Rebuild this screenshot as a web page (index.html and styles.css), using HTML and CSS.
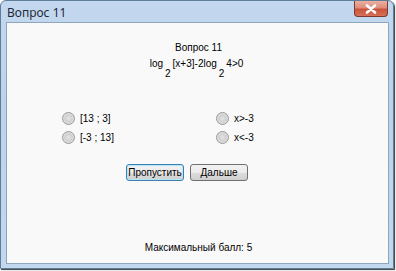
FILE: index.html
```html
<!DOCTYPE html>
<html>
<head>
<meta charset="utf-8">
<link rel="stylesheet" href="styles.css">
</head>
<body>
<div class="window">
  <div class="titlebar">
    <span class="title">Вопрос 11</span>
    <span class="close">
      <svg width="12" height="10" viewBox="0 0 12 10"><path d="M2 1.5 L10 8.5 M10 1.5 L2 8.5" stroke="#fff" stroke-width="2.6" stroke-linecap="round"/></svg>
    </span>
  </div>
  <div class="content">
    <div class="qtitle">Вопрос 11</div>
    <div class="formula">log<sub>2</sub>[x+3]-2log<sub>2</sub>4&gt;0</div>
    <div class="options">
      <label class="opt"><span class="radio"></span>[13 ; 3]</label>
      <label class="opt"><span class="radio"></span>x&gt;-3</label>
      <label class="opt"><span class="radio"></span>[-3 ; 13]</label>
      <label class="opt"><span class="radio"></span>x&lt;-3</label>
    </div>
    <div class="buttons">
      <button class="btn default">Пропустить</button>
      <button class="btn">Дальше</button>
    </div>
    <div class="spacer"></div>
    <div class="score">Максимальный балл: 5</div>
  </div>
</div>
</body>
</html>
```
FILE: styles.css
```css
html, body {
  margin: 0;
  padding: 0;
  background: #ffffff;
}
body {
  width: 396px;
  height: 271px;
  overflow: hidden;
}
.window {
  box-sizing: border-box;
  width: 394px;
  height: 269px;
  border: 1px solid #5f7c99;
  border-radius: 6px 6px 0 0;
  background: linear-gradient(180deg, #c3d8ef 0%, #bcd3ec 40%, #c2d8ee 100%);
  padding: 0 4px 4px 5px;
  display: flex;
  flex-direction: column;
  box-shadow: 1px 1px 1px #3a3a3a;
}
.titlebar {
  height: 21px;
  display: flex;
  align-items: flex-start;
  justify-content: space-between;
}
.title {
  font-family: "Noto Sans", "DejaVu Sans", sans-serif;
  font-size: 12px;
  color: #1e2a36;
  margin-top: 3px;
  margin-left: 1px;
}
.close {
  width: 34px;
  height: 16px;
  margin-right: 1px;
  border: 1px solid #7a3a30;
  border-top: none;
  border-radius: 0 0 4px 4px;
  background: linear-gradient(180deg, #eab0a2 0%, #de8d7a 45%, #c9533c 55%, #d87058 100%);
  display: flex;
  align-items: center;
  justify-content: center;
  box-sizing: border-box;
}
.content {
  flex: 1;
  background: #f9f9f9;
  border: 1px solid #8fa5bb;
  display: flex;
  flex-direction: column;
  font-family: "Liberation Sans", Arial, sans-serif;
  font-size: 10px;
  color: #000;
}
.qtitle {
  text-align: center;
  margin-top: 18px;
  line-height: 13px;
  padding-left: 2px;
}
.formula {
  text-align: center;
  margin-top: 3px;
  line-height: 13px;
  padding-right: 2px;
}
.formula sub {
  font-size: 10px;
  vertical-align: -10px;
  margin: 0 2px 0 2px;
  line-height: 0;
}
.options {
  display: grid;
  grid-template-columns: 154px 100px;
  row-gap: 6px;
  margin-top: 38px;
  margin-left: 55px;
}
.opt {
  display: flex;
  align-items: center;
  gap: 5px;
  line-height: 13px;
}
.radio {
  width: 11px;
  height: 11px;
  border-radius: 50%;
  border: 1px solid #979797;
  background: radial-gradient(circle at 50% 50%, #e6e6e6 0%, #d0d0d0 45%, #f4f4f4 100%);
  box-sizing: content-box;
}
.buttons {
  display: flex;
  gap: 6px;
  margin-top: 20px;
  margin-left: 119px;
}
.btn {
  box-sizing: border-box;
  height: 17px;
  padding: 0;
  font-family: "Liberation Sans", Arial, sans-serif;
  font-size: 10px;
  color: #000;
  border: 1px solid #707070;
  border-radius: 3px;
  background: linear-gradient(180deg, #f2f2f2 0%, #ebebeb 50%, #dddddd 51%, #cfcfcf 100%);
  width: 58px;
}
.btn.default {
  border-color: #3c7fb1;
  box-shadow: inset 0 0 0 1px #b6e4f8;
}
.spacer {
  flex: 1;
}
.score {
  text-align: center;
  margin-bottom: 9px;
  line-height: 13px;
  padding-left: 2px;
}
```
